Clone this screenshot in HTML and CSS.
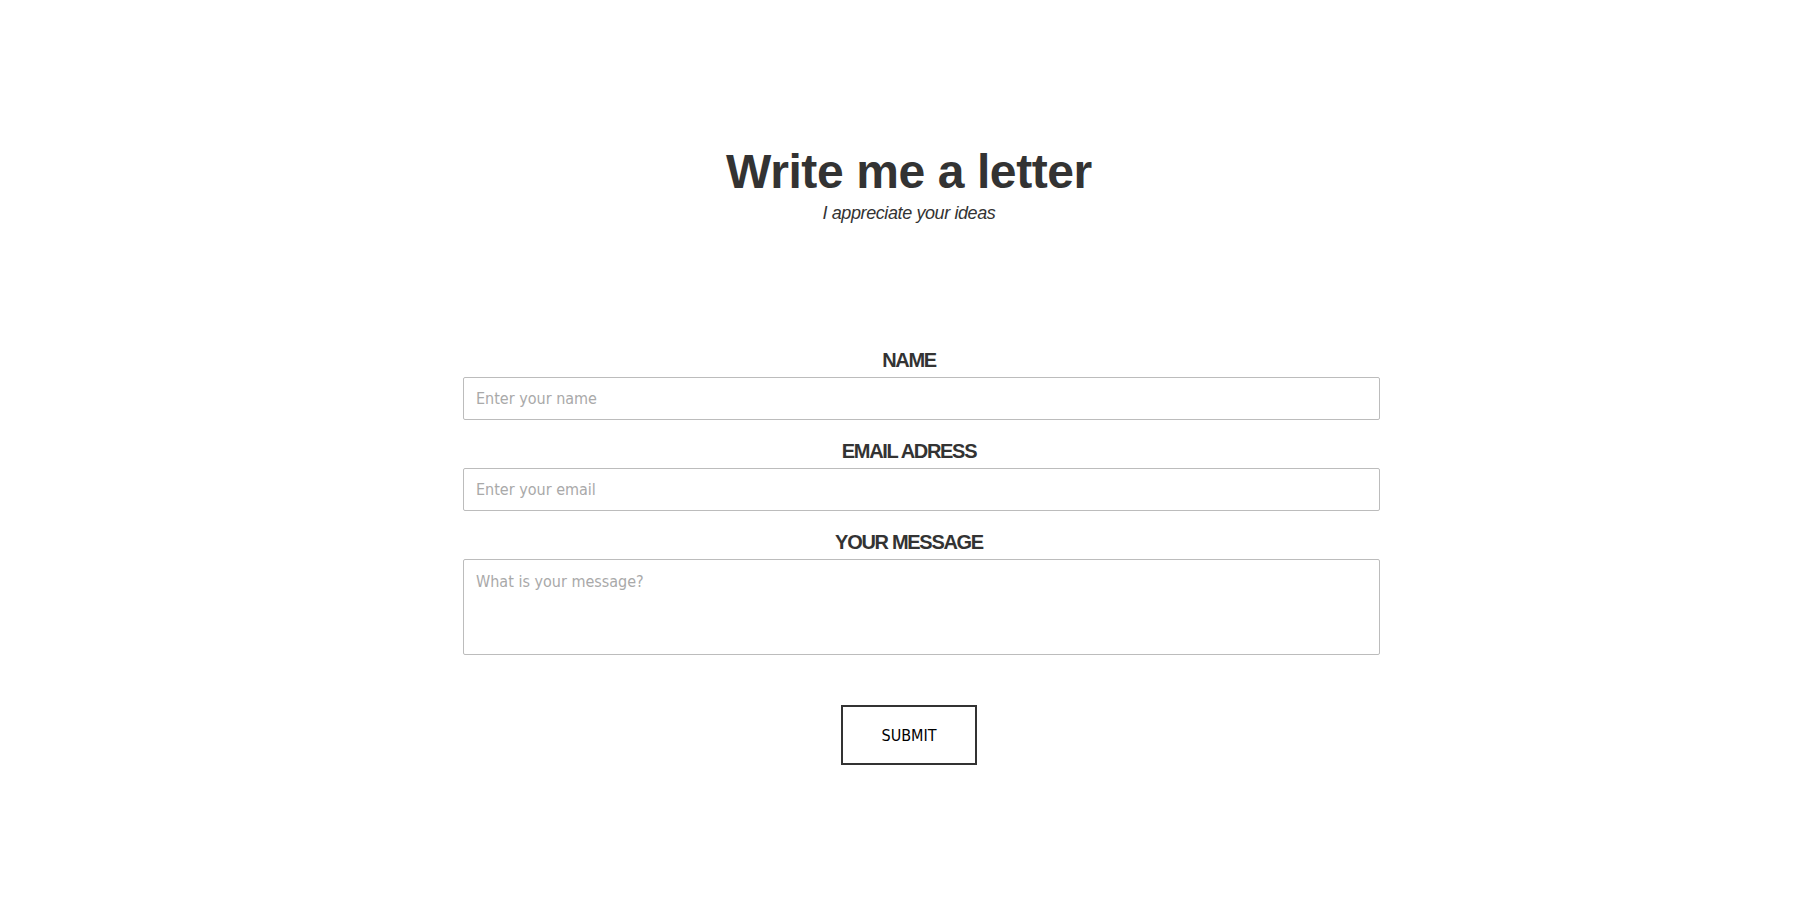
FILE: index.html
```html
<!DOCTYPE html>
<html lang="en">
<head>
<meta charset="utf-8">
<title>Write me a letter</title>
<link rel="stylesheet" href="styles.css">
</head>
<body>
<main class="page">
  <header class="intro">
    <h1 class="title">Write me a letter</h1>
    <p class="subtitle">I appreciate your ideas</p>
  </header>
  <form class="letter-form">
    <div class="field">
      <label class="field-label" for="name">NAME</label>
      <input class="field-input" id="name" type="text" placeholder="Enter your name">
    </div>
    <div class="field">
      <label class="field-label" for="email">EMAIL ADRESS</label>
      <input class="field-input" id="email" type="email" placeholder="Enter your email">
    </div>
    <div class="field">
      <label class="field-label" for="message">YOUR MESSAGE</label>
      <textarea class="field-input field-area" id="message" placeholder="What is your message?"></textarea>
    </div>
    <div class="actions">
      <button class="submit" type="button">SUBMIT</button>
    </div>
  </form>
</main>
</body>
</html>
```

FILE: styles.css
```css
html, body {
  margin: 0;
  padding: 0;
  background: #ffffff;
}

.page {
  padding-top: 144px;
  font-family: "Liberation Sans", Arial, sans-serif;
  color: #333333;
}

.intro {
  text-align: center;
}

.title {
  margin: 0;
  font-size: 48px;
  line-height: 56px;
  font-weight: bold;
  letter-spacing: -0.4px;
}

.subtitle {
  margin: 2px 0 0;
  font-size: 18px;
  line-height: 22px;
  font-style: italic;
  letter-spacing: -0.4px;
}

.letter-form {
  width: 892px;
  margin: 124px auto 0;
  display: flex;
  flex-direction: column;
  gap: 19px;
}

.field {
  display: flex;
  flex-direction: column;
  gap: 5px;
}

.field-label {
  display: block;
  text-align: center;
  font-size: 20px;
  line-height: 24px;
  font-weight: bold;
  letter-spacing: -1.3px;
  color: #333333;
}

.field-input {
  box-sizing: border-box;
  width: 917px;
  height: 43px;
  margin: 0;
  padding: 0 12px;
  border: 1px solid #bcbcbc;
  border-radius: 2px;
  background: #ffffff;
  font-family: "DejaVu Sans Condensed", "DejaVu Sans", sans-serif;
  font-stretch: condensed;
  font-size: 16px;
  color: #333333;
  outline: none;
}

.field-input::placeholder {
  color: #a9a9a9;
}

.field-area {
  height: 96px;
  padding: 11px 12px;
  line-height: 22px;
  resize: none;
  display: block;
}

.actions {
  display: flex;
  justify-content: center;
  padding-top: 31px;
}

.submit {
  box-sizing: border-box;
  width: 136px;
  height: 60px;
  margin: 0;
  padding: 0;
  border: 2px solid #333333;
  border-radius: 0;
  background: #ffffff;
  font-family: "DejaVu Sans Condensed", "DejaVu Sans", sans-serif;
  font-stretch: condensed;
  font-size: 16px;
  color: #000000;
  cursor: pointer;
}
```
